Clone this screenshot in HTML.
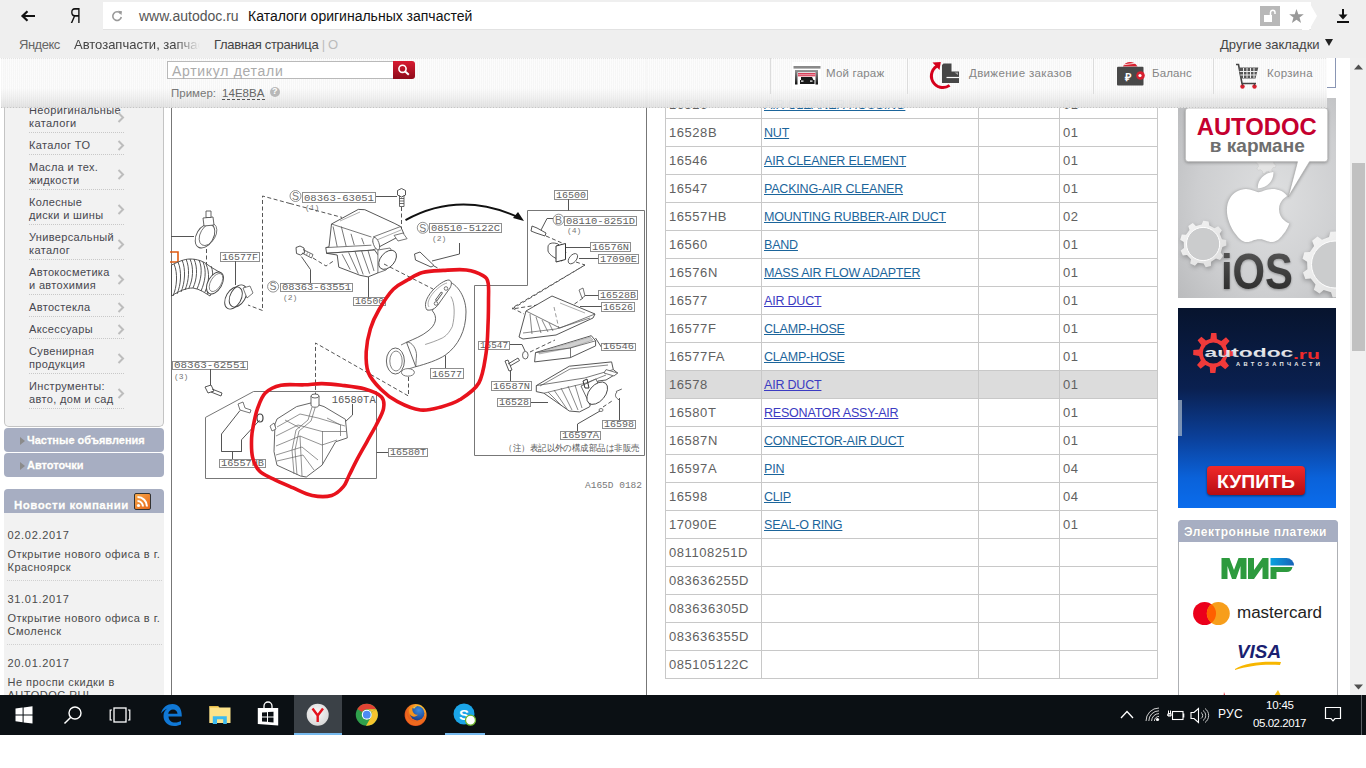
<!DOCTYPE html>
<html><head><meta charset="utf-8">
<style>
*{margin:0;padding:0;box-sizing:border-box}
html,body{width:1366px;height:768px;overflow:hidden;background:#fff;font-family:"Liberation Sans",sans-serif;position:relative}
.a{position:absolute;white-space:nowrap}
svg{position:absolute;overflow:visible}

</style></head><body>
<div class="a" style="left:0;top:0;width:1366px;height:58px;background:#efefef"></div>

<!-- back arrow -->
<svg style="left:20px;top:10px" width="16" height="12" viewBox="0 0 16 12"><path d="M15 6H3M7.5 1.2L2.5 6l5 4.8" fill="none" stroke="#111" stroke-width="2.2"/></svg>
<div class="a" style="left:70px;top:4px;font-size:22px;line-height:24px;color:#111;transform:scaleX(.68);transform-origin:0 0">Я</div>
<!-- url box -->
<div class="a" style="left:103px;top:2px;width:1208px;height:28px;background:#fff;border-bottom:1px solid #e2e2e2"></div>
<svg style="left:1302px;top:2px" width="16" height="28" viewBox="0 0 16 28"><path d="M0 0H7L15 14L7 28H0Z" fill="#fff"/></svg>
<svg style="left:111px;top:10px" width="12" height="12" viewBox="0 0 12 12"><path d="M9.5 3.5A4.3 4.3 0 1 0 10.3 7" fill="none" stroke="#999" stroke-width="1.6"/><path d="M7 0.8L11 1.2L10.4 5.2Z" fill="#999"/></svg>
<div class="a" style="left:139px;top:8px;font-size:14px;color:#555">www.autodoc.ru</div>
<div class="a" style="left:248px;top:8px;font-size:14px;color:#111">Каталоги оригинальных запчастей</div>
<div class="a" style="left:1260px;top:6px;width:20px;height:20px;background:#b8b8b8"></div>
<svg style="left:1263px;top:9px" width="14" height="14" viewBox="0 0 14 14"><rect x="1" y="6" width="8" height="7" fill="#fff"/><path d="M7.5 6V3.5A2.2 2.2 0 0 1 12 3.5V5" fill="none" stroke="#fff" stroke-width="1.5"/></svg>
<svg style="left:1289px;top:9px" width="15" height="14" viewBox="0 0 24 23"><path d="M12 0L15 8.5H24L17 14L19.5 23L12 17.5L4.5 23L7 14L0 8.5H9Z" fill="#999"/></svg>
<svg style="left:1336px;top:8px" width="14" height="16" viewBox="0 0 14 16"><path d="M7 1V10" stroke="#111" stroke-width="2"/><path d="M2.5 6.5L7 11.5L11.5 6.5Z" fill="#111"/><rect x="1" y="13" width="12" height="2" fill="#111"/></svg>
<!-- bookmarks -->
<div class="a" style="left:19px;top:37px;font-size:13px;letter-spacing:-.5px;color:#666">Яндекс</div>
<div class="a" style="left:74px;top:37px;font-size:13px;color:#444;width:126px;overflow:hidden;-webkit-mask-image:linear-gradient(90deg,#000 80%,transparent)">Автозапчасти, запчасти</div>
<div class="a" style="left:214px;top:37px;font-size:13px;letter-spacing:-.3px;color:#444">Главная страница <span style="color:#bbb">| О</span></div>
<div class="a" style="left:1220px;top:37px;font-size:13px;color:#444">Другие закладки</div>
<svg style="left:1325px;top:39px" width="8" height="7" viewBox="0 0 8 7"><path d="M0 0H8L4 7Z" fill="#222"/></svg>
<div class="a" style="left:4px;top:58px;width:160px;height:369px;background:#f2f2f2;border:1px solid #c4c4c4;border-top:none;border-radius:0 0 5px 5px"></div>
<div class="a" style="left:29px;top:104px;font-size:11px;line-height:13px;letter-spacing:.35px;color:#47474f">Неоригинальные<br>каталоги</div>
<div class="a" style="left:29px;top:132px;width:95px;height:1px;background-image:linear-gradient(90deg,#c8c8c8 50%,transparent 50%);background-size:2px 1px"></div>
<svg style="left:117px;top:111.5px" width="8" height="11" viewBox="0 0 8 11"><path d="M1.5 1L6 5.5L1.5 10" fill="none" stroke="#bdbdbd" stroke-width="2"/></svg>
<div class="a" style="left:29px;top:139px;font-size:11px;line-height:13px;letter-spacing:.35px;color:#47474f">Каталог ТО</div>
<div class="a" style="left:29px;top:154px;width:95px;height:1px;background-image:linear-gradient(90deg,#c8c8c8 50%,transparent 50%);background-size:2px 1px"></div>
<svg style="left:117px;top:140.0px" width="8" height="11" viewBox="0 0 8 11"><path d="M1.5 1L6 5.5L1.5 10" fill="none" stroke="#bdbdbd" stroke-width="2"/></svg>
<div class="a" style="left:29px;top:161px;font-size:11px;line-height:13px;letter-spacing:.35px;color:#47474f">Масла и тех.<br>жидкости</div>
<div class="a" style="left:29px;top:189px;width:95px;height:1px;background-image:linear-gradient(90deg,#c8c8c8 50%,transparent 50%);background-size:2px 1px"></div>
<svg style="left:117px;top:168.5px" width="8" height="11" viewBox="0 0 8 11"><path d="M1.5 1L6 5.5L1.5 10" fill="none" stroke="#bdbdbd" stroke-width="2"/></svg>
<div class="a" style="left:29px;top:196px;font-size:11px;line-height:13px;letter-spacing:.35px;color:#47474f">Колесные<br>диски и шины</div>
<div class="a" style="left:29px;top:224px;width:95px;height:1px;background-image:linear-gradient(90deg,#c8c8c8 50%,transparent 50%);background-size:2px 1px"></div>
<svg style="left:117px;top:203.5px" width="8" height="11" viewBox="0 0 8 11"><path d="M1.5 1L6 5.5L1.5 10" fill="none" stroke="#bdbdbd" stroke-width="2"/></svg>
<div class="a" style="left:29px;top:231px;font-size:11px;line-height:13px;letter-spacing:.35px;color:#47474f">Универсальный<br>каталог</div>
<div class="a" style="left:29px;top:259px;width:95px;height:1px;background-image:linear-gradient(90deg,#c8c8c8 50%,transparent 50%);background-size:2px 1px"></div>
<svg style="left:117px;top:238.5px" width="8" height="11" viewBox="0 0 8 11"><path d="M1.5 1L6 5.5L1.5 10" fill="none" stroke="#bdbdbd" stroke-width="2"/></svg>
<div class="a" style="left:29px;top:266px;font-size:11px;line-height:13px;letter-spacing:.35px;color:#47474f">Автокосметика<br>и автохимия</div>
<div class="a" style="left:29px;top:294px;width:95px;height:1px;background-image:linear-gradient(90deg,#c8c8c8 50%,transparent 50%);background-size:2px 1px"></div>
<svg style="left:117px;top:273.5px" width="8" height="11" viewBox="0 0 8 11"><path d="M1.5 1L6 5.5L1.5 10" fill="none" stroke="#bdbdbd" stroke-width="2"/></svg>
<div class="a" style="left:29px;top:301px;font-size:11px;line-height:13px;letter-spacing:.35px;color:#47474f">Автостекла</div>
<div class="a" style="left:29px;top:316px;width:95px;height:1px;background-image:linear-gradient(90deg,#c8c8c8 50%,transparent 50%);background-size:2px 1px"></div>
<svg style="left:117px;top:302.0px" width="8" height="11" viewBox="0 0 8 11"><path d="M1.5 1L6 5.5L1.5 10" fill="none" stroke="#bdbdbd" stroke-width="2"/></svg>
<div class="a" style="left:29px;top:323px;font-size:11px;line-height:13px;letter-spacing:.35px;color:#47474f">Аксессуары</div>
<div class="a" style="left:29px;top:338px;width:95px;height:1px;background-image:linear-gradient(90deg,#c8c8c8 50%,transparent 50%);background-size:2px 1px"></div>
<svg style="left:117px;top:324.0px" width="8" height="11" viewBox="0 0 8 11"><path d="M1.5 1L6 5.5L1.5 10" fill="none" stroke="#bdbdbd" stroke-width="2"/></svg>
<div class="a" style="left:29px;top:345px;font-size:11px;line-height:13px;letter-spacing:.35px;color:#47474f">Сувенирная<br>продукция</div>
<div class="a" style="left:29px;top:373px;width:95px;height:1px;background-image:linear-gradient(90deg,#c8c8c8 50%,transparent 50%);background-size:2px 1px"></div>
<svg style="left:117px;top:352.5px" width="8" height="11" viewBox="0 0 8 11"><path d="M1.5 1L6 5.5L1.5 10" fill="none" stroke="#bdbdbd" stroke-width="2"/></svg>
<div class="a" style="left:29px;top:380px;font-size:11px;line-height:13px;letter-spacing:.35px;color:#47474f">Инструменты:<br>авто, дом и сад</div>
<div class="a" style="left:29px;top:408px;width:95px;height:1px;background-image:linear-gradient(90deg,#c8c8c8 50%,transparent 50%);background-size:2px 1px"></div>
<svg style="left:117px;top:387.5px" width="8" height="11" viewBox="0 0 8 11"><path d="M1.5 1L6 5.5L1.5 10" fill="none" stroke="#bdbdbd" stroke-width="2"/></svg>
<div class="a" style="left:4px;top:428px;width:160px;height:24px;background:#a7aec2;border-radius:4px"></div>
<svg style="left:20px;top:437px" width="5" height="8" viewBox="0 0 5 8"><path d="M0 0L5 4L0 8Z" fill="#8b8b8b"/></svg>
<div class="a" style="left:27px;top:434px;font-size:11px;line-height:13px;font-weight:bold;color:#fff;-webkit-text-stroke:.35px #fff;text-shadow:0 0 1px #888">Частные объявления</div>
<div class="a" style="left:4px;top:453px;width:160px;height:24px;background:#a7aec2;border-radius:4px"></div>
<svg style="left:20px;top:462px" width="5" height="8" viewBox="0 0 5 8"><path d="M0 0L5 4L0 8Z" fill="#8b8b8b"/></svg>
<div class="a" style="left:27px;top:459px;font-size:11px;line-height:13px;font-weight:bold;color:#fff;-webkit-text-stroke:.35px #fff;text-shadow:0 0 1px #888">Автоточки</div>
<div class="a" style="left:4px;top:489px;width:160px;height:24px;background:#a7aec2;border-radius:4px 4px 0 0"></div>
<div class="a" style="left:14px;top:497.5px;font-size:11.5px;line-height:14px;letter-spacing:.5px;font-weight:bold;color:#fff;-webkit-text-stroke:.35px #fff;text-shadow:0 0 1px #888">Новости компании</div>
<div class="a" style="left:134px;top:493px;width:17px;height:17px;background:linear-gradient(135deg,#f9a94a,#e5661a);border:1px solid #333;border-radius:2px"></div>
<svg style="left:136px;top:495px" width="13" height="13" viewBox="0 0 13 13"><circle cx="2.5" cy="10.5" r="1.6" fill="#fff"/><path d="M1.5 6A5.5 5.5 0 0 1 7 11.5M1.5 2A9.5 9.5 0 0 1 11 11.5" fill="none" stroke="#fff" stroke-width="2"/></svg>
<div class="a" style="left:4px;top:513px;width:160px;height:190px;background:#f2f2f2"></div>
<div class="a" style="left:7.5px;top:529px;font-size:11px;line-height:13px;letter-spacing:.69px;color:#4a4a4a">02.02.2017</div>
<div class="a" style="left:7.5px;top:548px;font-size:11px;line-height:13px;letter-spacing:.48px;color:#4a4a4a">Открытие нового офиса в г.<br>Красноярск</div>
<div class="a" style="left:7.5px;top:593px;font-size:11px;line-height:13px;letter-spacing:.69px;color:#4a4a4a">31.01.2017</div>
<div class="a" style="left:7.5px;top:612px;font-size:11px;line-height:13px;letter-spacing:.48px;color:#4a4a4a">Открытие нового офиса в г.<br>Смоленск</div>
<div class="a" style="left:7.5px;top:657px;font-size:11px;line-height:13px;letter-spacing:.69px;color:#4a4a4a">20.01.2017</div>
<div class="a" style="left:7.5px;top:676px;font-size:11px;line-height:13px;letter-spacing:.48px;color:#4a4a4a">Не проспи скидки в<br>AUTODOC.RU!</div>
<div class="a" style="left:7px;top:580px;width:155px;height:1px;background-image:linear-gradient(90deg,#d0d0d0 50%,transparent 50%);background-size:2px 1px"></div>
<div class="a" style="left:7px;top:644px;width:155px;height:1px;background-image:linear-gradient(90deg,#d0d0d0 50%,transparent 50%);background-size:2px 1px"></div>
<svg style="left:171px;top:58px" width="476" height="637" viewBox="171 58 476 637">
<rect x="171" y="58" width="476" height="637" fill="#fff"/>
<path d="M171.5 58V695M646.5 58V695" stroke="#777" stroke-width="1"/>
<path d="M171.0 236.5 L194.0 236.5" fill="none" stroke="#555" stroke-width="1"/>
<ellipse cx="205" cy="236" rx="8.5" ry="13" transform="rotate(30 205 236)" fill="none" stroke="#555" stroke-width="0.9"/>
<ellipse cx="208" cy="234.5" rx="7.5" ry="12" transform="rotate(30 208 234.5)" fill="none" stroke="#666" stroke-width="0.8"/>
<path d="M203 218L213 217L214 225L204 226Z" fill="#fff" stroke="#555" stroke-width="0.9"/><path d="M206 211H211V217.5H206Z" fill="#fff" stroke="#555" stroke-width="0.9"/>
<path d="M206.5 249.0 L206.5 266.0" fill="none" stroke="#555" stroke-width="1" stroke-dasharray="4 2.5"/>
<path d="M170 252H178V262H170" fill="none" stroke="#e05a10" stroke-width="1.6"/>
<path d="M171.5 265C178 262 184 259 190 259C197 259 203 261 208 265C212 268 216 270 221 273L210 296C205 293 200 289 193 288C186 288 179 291 171.5 296Z" fill="#fff" stroke="#444" stroke-width="0.9"/>
<path d="M174 264C178 273 177 287 173 296" fill="none" stroke="#444" stroke-width="0.9"/>
<path d="M178 262C182 271 181 285 177 294" fill="none" stroke="#444" stroke-width="0.9"/>
<path d="M182 260C186 269 185 283 181 292" fill="none" stroke="#444" stroke-width="0.9"/>
<path d="M186 259C190 268 189 281 185 290" fill="none" stroke="#444" stroke-width="0.9"/>
<path d="M190 259C194 268 193 279 189 288" fill="none" stroke="#444" stroke-width="0.9"/>
<path d="M194 259C198 268 197 279 193 288" fill="none" stroke="#444" stroke-width="0.9"/>
<path d="M199 260C203 269 201 280 197 289" fill="none" stroke="#444" stroke-width="0.9"/>
<path d="M203 262C207 271 205 282 201 291" fill="none" stroke="#444" stroke-width="0.9"/>
<path d="M206 264C210 273 209 283 205 292" fill="none" stroke="#444" stroke-width="0.9"/>
<path d="M211 266C215 275 211 285 207 294" fill="none" stroke="#444" stroke-width="0.9"/>
<ellipse cx="215" cy="283" rx="7" ry="12" transform="rotate(30 215 283)" fill="#fff" stroke="#444" stroke-width="0.9"/>
<ellipse cx="216" cy="282.5" rx="5.3" ry="10" transform="rotate(30 216 282.5)" fill="none" stroke="#666" stroke-width="0.7"/>
<rect x="220.5" y="252.5" width="39.0" height="9.0" fill="none" stroke="#8f8f8f" stroke-width="1"/><text x="222.0" y="260.0" font-family="Liberation Mono" font-size="9.6" fill="#606060" textLength="36.0" lengthAdjust="spacingAndGlyphs">16577F</text>
<path d="M235.5 261.2 L235.5 285.0" fill="none" stroke="#555" stroke-width="1"/>
<ellipse cx="233.5" cy="298" rx="7.5" ry="12" transform="rotate(30 233.5 298)" fill="none" stroke="#444" stroke-width="0.9"/>
<ellipse cx="238" cy="296" rx="7.5" ry="12" transform="rotate(30 238 296)" fill="none" stroke="#444" stroke-width="0.9"/>
<path d="M243 288L250 286L253 293L247 298Z" fill="#fff" stroke="#555" stroke-width="0.8"/>
<path d="M290.0 203.5 L262.5 196.0 L262.5 310.5 L248.0 305.0" fill="none" stroke="#555" stroke-width="1" stroke-dasharray="4 2.5"/>
<circle cx="295.5" cy="196" r="5.5" fill="none" stroke="#777" stroke-width="0.8"/><text x="295.5" y="199.8" text-anchor="middle" font-family="Liberation Sans" font-size="10.5" fill="#777">S</text>
<rect x="302.5" y="192.5" width="73.0" height="10.0" fill="none" stroke="#8f8f8f" stroke-width="1"/><text x="304.0" y="201.0" font-family="Liberation Mono" font-size="9.6" fill="#606060" textLength="70.0" lengthAdjust="spacingAndGlyphs">08363-63051</text>
<text x="305" y="210" font-family="Liberation Mono" font-size="8" fill="#777">(1)</text>
<path d="M376.0 196.5 L397.0 196.5" fill="none" stroke="#555" stroke-width="1"/>
<path d="M397.5 190.5L401.5 188.5L405.5 190.5L405.5 195L401.5 197L397.5 195Z" fill="#fff" stroke="#444" stroke-width="0.9"/>
<path d="M399.5 195.5V206.5H404V195.5M399.5 198.5H404M399.5 201H404M399.5 203.5H404" fill="none" stroke="#444" stroke-width="0.8"/>
<path d="M401.5 207.0 L401.5 229.0" fill="none" stroke="#555" stroke-width="1" stroke-dasharray="4 2.5"/>
<path d="M290.0 203.5 L342.0 217.4" fill="none" stroke="#555" stroke-width="1" stroke-dasharray="4 2.5"/>
<path d="M331.5 224L358.3 209.4L364.8 209.7L394.1 223.2L400.6 226.5L403.9 233.8L374.6 249.3L372.2 250.1L326.6 253.3L325.8 247.6L329 246.8Z" fill="#fff" stroke="#444" stroke-width="0.9"/>
<path d="M331.5 224.0 L371.4 237.0" fill="none" stroke="#555" stroke-width="0.8"/>
<path d="M325.8 247.6 L371.4 245.2" fill="none" stroke="#555" stroke-width="0.8"/>
<path d="M373.0 237.0 L400.6 226.5" fill="none" stroke="#555" stroke-width="0.8"/>
<path d="M372.0 242.0 L401.0 230.0" fill="none" stroke="#777" stroke-width="0.6"/>
<path d="M340.0 221.0 L360.0 212.0" fill="none" stroke="#777" stroke-width="0.6"/>
<ellipse cx="376.2" cy="243.6" rx="2.8" ry="6.5" transform="rotate(-20 376.2 243.6)" fill="#fff" stroke="#555" stroke-width="0.8"/>
<path d="M394.1 235.4L403 233L407.1 238.7L398 241Z" fill="#fff" stroke="#555" stroke-width="0.8"/>
<path d="M333.1 226.5 L337.2 246.8" fill="none" stroke="#555" stroke-width="0.8"/>
<path d="M341.3 226.5 L346.1 246.0" fill="none" stroke="#555" stroke-width="0.8"/>
<path d="M351.0 233.8 L354.3 245.2" fill="none" stroke="#555" stroke-width="0.8"/>
<path d="M361.6 237.9 L364.0 244.4" fill="none" stroke="#555" stroke-width="0.8"/>
<path d="M337.2 255L338.8 267.2L360 275.3L368.1 276.9L377.9 272.9L383 262L374.6 250L326.6 253.3Z" fill="#fff" stroke="#444" stroke-width="0.9"/>
<path d="M342.1 254.2 L350.2 269.6" fill="none" stroke="#555" stroke-width="0.8"/>
<path d="M348.6 252.5 L358.3 273.7" fill="none" stroke="#555" stroke-width="0.8"/>
<path d="M355.1 251.7 L363.2 274.5" fill="none" stroke="#555" stroke-width="0.8"/>
<path d="M361.6 250.9 L369.7 273.7" fill="none" stroke="#555" stroke-width="0.8"/>
<path d="M368.0 250.5 L374.0 271.0" fill="none" stroke="#555" stroke-width="0.8"/>
<path d="M377.9 250L390 248L395 256L386 270L377.9 272.9Z" fill="#fff" stroke="#555" stroke-width="0.8"/>
<ellipse cx="387.6" cy="259.8" rx="7" ry="11" transform="rotate(40 387.6 259.8)" fill="#fff" stroke="#444" stroke-width="0.9"/>
<path d="M296 247.5L300 246L304 248L304.5 252.5L300.5 255L296.5 253.5Z" fill="#fff" stroke="#444" stroke-width="0.9"/>
<path d="M303 249.5L313 254.5L311.5 258L302 253" fill="none" stroke="#444" stroke-width="0.8"/><path d="M305 251L304 254M307.5 252.3L306.5 255.3M310 253.5L309 256.5" stroke="#555" stroke-width="0.6"/>
<path d="M313.0 258.0 L326.0 266.0 L335.0 260.0" fill="none" stroke="#555" stroke-width="1" stroke-dasharray="4 2.5"/>
<path d="M301.4 256.6 L310.5 269.6 L310.5 283.0" fill="none" stroke="#555" stroke-width="1"/>
<circle cx="273.1" cy="286.6" r="5.5" fill="none" stroke="#777" stroke-width="0.8"/><text x="273.1" y="290.40000000000003" text-anchor="middle" font-family="Liberation Sans" font-size="10.5" fill="#777">S</text>
<rect x="280.5" y="283.5" width="72.0" height="8.0" fill="none" stroke="#8f8f8f" stroke-width="1"/><text x="282.0" y="290.0" font-family="Liberation Mono" font-size="9.6" fill="#606060" textLength="69.0" lengthAdjust="spacingAndGlyphs">08363-63551</text>
<text x="283" y="300" font-family="Liberation Mono" font-size="8" fill="#777">(2)</text>
<rect x="353.5" y="297.5" width="32.0" height="8.0" fill="none" stroke="#8f8f8f" stroke-width="1"/><text x="355.0" y="304.0" font-family="Liberation Mono" font-size="9.6" fill="#606060" textLength="29.0" lengthAdjust="spacingAndGlyphs">16500</text>
<path d="M368.5 297.5 L368.5 277.0" fill="none" stroke="#555" stroke-width="1"/>
<path d="M384.0 264.0 L433.0 289.0" fill="none" stroke="#555" stroke-width="1" stroke-dasharray="4 2.5"/>
<path d="M405.5 220.1Q460 190 520 218" fill="none" stroke="#111" stroke-width="2"/>
<path d="M524 221L513 218L518 212Z" fill="#111"/>
<circle cx="422.8" cy="227.8" r="5.5" fill="none" stroke="#777" stroke-width="0.8"/><text x="422.8" y="231.60000000000002" text-anchor="middle" font-family="Liberation Sans" font-size="10.5" fill="#777">S</text>
<rect x="429.5" y="223.5" width="72.0" height="9.0" fill="none" stroke="#8f8f8f" stroke-width="1"/><text x="431.0" y="231.0" font-family="Liberation Mono" font-size="9.6" fill="#606060" textLength="69.0" lengthAdjust="spacingAndGlyphs">08510-5122C</text>
<text x="432" y="241" font-family="Liberation Mono" font-size="8" fill="#777">(2)</text>
<path d="M459.5 243.0 L459.5 254.0 L432.0 261.0" fill="none" stroke="#555" stroke-width="1"/>
<path d="M414.5 254L420 252L434 265.5L431 267L415.5 260Z" fill="#fff" stroke="#444" stroke-width="0.9"/>
<path d="M434.0 266.0 L445.0 272.0" fill="none" stroke="#555" stroke-width="1" stroke-dasharray="4 2.5"/>
<path d="M527.5 210.5 L644.5 210.5 L644.5 455.5 L474.5 455.5 L474.5 285.5 L527.5 285.5Z" fill="none" stroke="#777" stroke-width="1"/>
<rect x="554.5" y="190.5" width="33.0" height="9.0" fill="none" stroke="#8f8f8f" stroke-width="1"/><text x="556.0" y="198.0" font-family="Liberation Mono" font-size="9.6" fill="#606060" textLength="30.0" lengthAdjust="spacingAndGlyphs">16500</text>
<path d="M568.5 199.1 L568.5 210.5" fill="none" stroke="#555" stroke-width="1"/>
<circle cx="558.6" cy="219.7" r="5.5" fill="none" stroke="#777" stroke-width="0.8"/><text x="558.6" y="223.5" text-anchor="middle" font-family="Liberation Sans" font-size="10.5" fill="#777">B</text>
<rect x="564.5" y="216.5" width="72.0" height="9.0" fill="none" stroke="#8f8f8f" stroke-width="1"/><text x="566.0" y="224.0" font-family="Liberation Mono" font-size="9.6" fill="#606060" textLength="69.0" lengthAdjust="spacingAndGlyphs">08110-8251D</text>
<text x="567" y="233" font-family="Liberation Mono" font-size="8" fill="#777">(4)</text>
<path d="M553.0 218.5 L547.0 218.5 L540.0 232.0" fill="none" stroke="#555" stroke-width="1"/>
<path d="M532 226L537 228L546 233L545 236L536 233L531 231Z" fill="#fff" stroke="#444" stroke-width="0.9"/>
<path d="M546.0 236.0 L562.0 243.0" fill="none" stroke="#555" stroke-width="1" stroke-dasharray="4 2.5"/>
<path d="M548 247C548 243 553 242 558 244L566 252L562 261C556 259 549 255 548 251Z" fill="#fff" stroke="#444" stroke-width="0.9"/>
<path d="M556 246L565.5 243.5V259.5L556 262Z" fill="#fff" stroke="#333" stroke-width="1"/>
<path d="M566.0 247.5 L590.2 247.5" fill="none" stroke="#555" stroke-width="1"/>
<rect x="590.5" y="242.5" width="40.0" height="9.0" fill="none" stroke="#8f8f8f" stroke-width="1"/><text x="592.0" y="250.0" font-family="Liberation Mono" font-size="9.6" fill="#606060" textLength="37.0" lengthAdjust="spacingAndGlyphs">16576N</text>
<ellipse cx="572.9" cy="258.7" rx="3.5" ry="6" transform="rotate(40 572.9 258.7)" fill="none" stroke="#555" stroke-width="0.9"/>
<path d="M579.0 258.5 L598.4 258.5" fill="none" stroke="#555" stroke-width="1"/>
<rect x="598.5" y="254.5" width="40.0" height="9.0" fill="none" stroke="#8f8f8f" stroke-width="1"/><text x="600.0" y="262.0" font-family="Liberation Mono" font-size="9.6" fill="#606060" textLength="37.0" lengthAdjust="spacingAndGlyphs">17090E</text>
<path d="M576.0 262.0 L585.0 265.0 L512.0 309.0 L544.0 304.0" fill="none" stroke="#555" stroke-width="1" stroke-dasharray="4 2.5"/>
<rect x="598.5" y="290.5" width="39.0" height="9.0" fill="none" stroke="#8f8f8f" stroke-width="1"/><text x="600.0" y="298.0" font-family="Liberation Mono" font-size="9.6" fill="#606060" textLength="36.0" lengthAdjust="spacingAndGlyphs">16528B</text>
<path d="M579 290L583 288L585 296L582 298Z" fill="#fff" stroke="#555" stroke-width="0.8"/>
<path d="M585.0 295.5 L598.4 295.5" fill="none" stroke="#555" stroke-width="1"/>
<path d="M583.0 298.0 L566.0 310.0" fill="none" stroke="#555" stroke-width="1" stroke-dasharray="4 2.5"/>
<rect x="601.5" y="302.5" width="33.0" height="9.0" fill="none" stroke="#8f8f8f" stroke-width="1"/><text x="603.0" y="310.0" font-family="Liberation Mono" font-size="9.6" fill="#606060" textLength="30.0" lengthAdjust="spacingAndGlyphs">16526</text>
<path d="M580.0 306.5 L601.5 306.5" fill="none" stroke="#555" stroke-width="1"/>
<path d="M585.0 265.0 L512.0 308.0 L524.0 314.0" fill="none" stroke="#555" stroke-width="1" stroke-dasharray="4 2.5"/>
<path d="M526 311L552 296L595 314L593 318L556 335L523 339L519 337Z" fill="#fff" stroke="#444" stroke-width="0.9"/>
<path d="M526.0 311.0 L560.0 328.0 L595.0 314.0" fill="none" stroke="#555" stroke-width="0.8"/>
<path d="M523.0 333.0 L556.0 329.0 L590.0 318.0" fill="none" stroke="#555" stroke-width="0.7"/>
<path d="M530.0 314.0 L532.0 334.0" fill="none" stroke="#555" stroke-width="0.7"/>
<path d="M536.0 317.0 L541.0 333.0" fill="none" stroke="#555" stroke-width="0.7"/>
<path d="M542.0 320.0 L548.0 332.0" fill="none" stroke="#555" stroke-width="0.7"/>
<path d="M549.0 323.0 L553.0 331.0" fill="none" stroke="#555" stroke-width="0.7"/>
<path d="M554.0 307.0 L559.0 329.0" fill="none" stroke="#555" stroke-width="0.6" stroke-dasharray="4 2.5"/>
<path d="M560.0 303.0 L585.0 313.0" fill="none" stroke="#777" stroke-width="0.6"/>
<path d="M535.5 352.6L591.3 335.7L595.6 340.8V345.9L570.2 357.7L534.6 361.9Z" fill="#fff" stroke="#444" stroke-width="0.9"/>
<path d="M539 352L590 337L593 340L570 348L539 354Z" fill="#d0d0d0" stroke="#888" stroke-width="0.5"/>
<path d="M535.5 352.6 L570.2 348.0 L595.6 340.8" fill="none" stroke="#555" stroke-width="0.8"/>
<path d="M570.5 348.0 L570.5 357.7" fill="none" stroke="#555" stroke-width="0.8"/>
<path d="M595.5 338.0 L601.3 347.0" fill="none" stroke="#555" stroke-width="1"/>
<rect x="601.5" y="343.5" width="34.0" height="7.0" fill="none" stroke="#8f8f8f" stroke-width="1"/><text x="603.0" y="349.0" font-family="Liberation Mono" font-size="9.6" fill="#606060" textLength="31.0" lengthAdjust="spacingAndGlyphs">16546</text>
<rect x="478.5" y="341.5" width="31.0" height="8.0" fill="none" stroke="#8f8f8f" stroke-width="1"/><text x="480.0" y="348.0" font-family="Liberation Mono" font-size="9.6" fill="#606060" textLength="28.0" lengthAdjust="spacingAndGlyphs">16547</text>
<path d="M510.0 344.5 L522.0 344.5 L525.0 351.0" fill="none" stroke="#555" stroke-width="1"/>
<ellipse cx="525.3" cy="355.2" rx="2.8" ry="3.8" fill="none" stroke="#555" stroke-width="0.9"/>
<path d="M530.0 352.0 L555.0 340.0" fill="none" stroke="#555" stroke-width="1" stroke-dasharray="4 2.5"/>
<path d="M505 361L508 360L512 370L509 371Z" fill="#fff" stroke="#444" stroke-width="0.9"/><path d="M508 364L518 358L519.5 360.5L510 366" fill="none" stroke="#444" stroke-width="0.9"/>
<path d="M510.5 371.0 L510.5 382.0" fill="none" stroke="#555" stroke-width="1"/>
<rect x="491.5" y="381.5" width="40.0" height="9.0" fill="none" stroke="#8f8f8f" stroke-width="1"/><text x="493.0" y="389.0" font-family="Liberation Mono" font-size="9.6" fill="#606060" textLength="37.0" lengthAdjust="spacingAndGlyphs">16587N</text>
<path d="M536.3 385.6L569.3 366.2L611.6 361.9L613.3 369.6L617.6 373L606 380L598 381L589.6 406.8L579.5 411.9L569.3 411L543.9 393.2L536.3 391.6Z" fill="#fff" stroke="#444" stroke-width="0.9"/>
<path d="M536.3 385.6 L584.6 378.0 L613.3 369.6" fill="none" stroke="#555" stroke-width="0.8"/>
<path d="M540.0 386.0 L570.0 369.0 L608.0 365.0" fill="none" stroke="#555" stroke-width="0.7"/>
<path d="M543.9 393.2 L586.0 383.0 L606.0 375.0" fill="none" stroke="#555" stroke-width="0.7"/>
<path d="M548.0 392.0 L562.0 406.0" fill="none" stroke="#555" stroke-width="0.7"/>
<path d="M554.0 390.0 L567.0 409.0" fill="none" stroke="#555" stroke-width="0.7"/>
<path d="M561.0 388.0 L572.0 410.0" fill="none" stroke="#555" stroke-width="0.7"/>
<path d="M568.0 386.0 L578.0 410.0" fill="none" stroke="#555" stroke-width="0.7"/>
<path d="M575.0 385.0 L582.0 408.0" fill="none" stroke="#555" stroke-width="0.7"/>
<path d="M581 386L596 379L604 396L590 405Z" fill="#fff" stroke="#444" stroke-width="0.8"/>
<ellipse cx="597.2" cy="393.2" rx="8" ry="13" transform="rotate(40 597.2 393.2)" fill="#fff" stroke="#444" stroke-width="0.9"/>
<path d="M583 381L587 379L589 388L585 388Z" fill="none" stroke="#333" stroke-width="1"/>
<path d="M606 369.6L617.6 373L614 376L604 373Z" fill="#fff" stroke="#555" stroke-width="0.8"/>
<path d="M530.5 402.5 L548.0 402.5" fill="none" stroke="#555" stroke-width="1"/>
<rect x="497.5" y="398.5" width="33.0" height="8.0" fill="none" stroke="#8f8f8f" stroke-width="1"/><text x="499.0" y="405.0" font-family="Liberation Mono" font-size="9.6" fill="#606060" textLength="30.0" lengthAdjust="spacingAndGlyphs">16528</text>
<path d="M615.9 391.6L621.8 389M617 392C614 395 616 398 618 399L619 400" fill="none" stroke="#555" stroke-width="0.9"/>
<path d="M619.5 398.0 L619.5 420.7" fill="none" stroke="#555" stroke-width="1"/>
<rect x="602.5" y="420.5" width="33.0" height="8.0" fill="none" stroke="#8f8f8f" stroke-width="1"/><text x="604.0" y="427.0" font-family="Liberation Mono" font-size="9.6" fill="#606060" textLength="30.0" lengthAdjust="spacingAndGlyphs">16598</text>
<path d="M577.5 431.7 L577.5 424.0 L600.0 411.0" fill="none" stroke="#555" stroke-width="1"/>
<ellipse cx="601" cy="410" rx="2" ry="1.5" fill="none" stroke="#555" stroke-width="0.8"/>
<path d="M603.0 407.0 L612.0 401.0" fill="none" stroke="#555" stroke-width="1" stroke-dasharray="4 2.5"/>
<rect x="560.5" y="431.5" width="40.0" height="8.0" fill="none" stroke="#8f8f8f" stroke-width="1"/><text x="562.0" y="438.0" font-family="Liberation Mono" font-size="9.6" fill="#606060" textLength="37.0" lengthAdjust="spacingAndGlyphs">16597A</text>
<text x="504.4" y="450.5" font-family="Liberation Sans" font-size="8.6" fill="#555" textLength="135" lengthAdjust="spacingAndGlyphs">（注）表記以外の構成部品は非販売</text>
<path d="M445 281C455 281 466 295 466 312C466 331 458 346 445.2 355.2C438 360 426 364 415.8 366.7L406.5 342.3C414 339 422 336 428 331C436 325 438 317 432.3 310.8Z" fill="#fff" stroke="#555" stroke-width="0.9"/>
<path d="M427 310C424 306 425 299 433 290C439 284 445 280 449 280C452 281 452 284 450 288L440 302C437 307 433 311 427 310Z" fill="#fff" stroke="#555" stroke-width="0.9"/>
<path d="M429 307C427 304 428 299 434 292C439 287 443 284 447 283" fill="none" stroke="#777" stroke-width="0.6"/>
<circle cx="446" cy="288.5" r="1.8" fill="none" stroke="#555" stroke-width="0.8"/><path d="M441.5 293L436.5 300" stroke="#555" stroke-width="2.4" stroke-linecap="round" fill="none"/><path d="M441.5 293L436.5 300" stroke="#fff" stroke-width="1" stroke-linecap="round" fill="none"/><circle cx="436" cy="303.5" r="1.8" fill="none" stroke="#555" stroke-width="0.8"/>
<path d="M450.9 296.5C455 303 455 316 452.3 326.6C449 333 446 336 442.3 338C436 341 430 343 425.1 344.5" fill="none" stroke="#777" stroke-width="0.7"/>
<path d="M406.5 342.3C412 341 417 350 416.5 356C416 362 415.8 366.7 415.8 366.7" fill="none" stroke="#555" stroke-width="0.8"/>
<path d="M401 345L406.5 342.3M405 370L415.8 366.7" fill="none" stroke="#555" stroke-width="0.8"/>
<ellipse cx="395.4" cy="361" rx="9" ry="13" fill="#fff" stroke="#555" stroke-width="0.9"/>
<ellipse cx="396" cy="361" rx="6.2" ry="10" fill="none" stroke="#666" stroke-width="0.8"/>
<ellipse cx="407.9" cy="372.4" rx="6.5" ry="3.8" fill="#fff" stroke="#555" stroke-width="0.8"/>
<path d="M445.5 355.5 L445.5 368.8" fill="none" stroke="#555" stroke-width="1"/>
<rect x="430.5" y="368.5" width="33.0" height="10.0" fill="none" stroke="#8f8f8f" stroke-width="1"/><text x="432.0" y="377.0" font-family="Liberation Mono" font-size="9.6" fill="#606060" textLength="30.0" lengthAdjust="spacingAndGlyphs">16577</text>
<path d="M408.5 377.0 L408.5 396.0 L315.5 343.0 L315.5 396.0" fill="none" stroke="#555" stroke-width="1" stroke-dasharray="4 2.5"/>
<rect x="172.5" y="361.5" width="75.0" height="8.0" fill="none" stroke="#8f8f8f" stroke-width="1"/><text x="174.0" y="368.0" font-family="Liberation Mono" font-size="9.6" fill="#606060" textLength="72.0" lengthAdjust="spacingAndGlyphs">08363-62551</text>
<text x="174" y="379" font-family="Liberation Mono" font-size="8" fill="#777">(3)</text>
<path d="M210.5 369.0 L210.5 386.0" fill="none" stroke="#555" stroke-width="1"/>
<path d="M205 387L211 385L214 391L208 393Z" fill="#fff" stroke="#444" stroke-width="0.9"/><path d="M212 389L222 393L221 396L211 392" fill="none" stroke="#444" stroke-width="0.9"/>
<path d="M205.5 417.4 L253.6 391.5 L376.5 391.5 L376.5 478.5 L205.5 478.5Z" fill="none" stroke="#777" stroke-width="1"/>
<path d="M376.6 452.5 L388.4 452.5" fill="none" stroke="#555" stroke-width="1"/>
<rect x="388.5" y="448.5" width="39.0" height="8.0" fill="none" stroke="#8f8f8f" stroke-width="1"/><text x="390.0" y="455.0" font-family="Liberation Mono" font-size="9.6" fill="#606060" textLength="36.0" lengthAdjust="spacingAndGlyphs">16580T</text>
<text x="331.7" y="403.1" font-family="Liberation Mono" font-size="10" fill="#555" textLength="44" lengthAdjust="spacingAndGlyphs">16580TA</text>
<path d="M352.5 404.0 L352.5 415.0 L345.0 422.0" fill="none" stroke="#555" stroke-width="1"/>
<path d="M221.5 451.6 L221.5 434.0 L240.0 410.5" fill="none" stroke="#555" stroke-width="1"/>
<path d="M241.5 451.6 L241.5 439.8 L259.5 420.3" fill="none" stroke="#555" stroke-width="1"/>
<path d="M221.4 451.5 L241.9 451.5" fill="none" stroke="#555" stroke-width="1"/>
<path d="M232.5 451.6 L232.5 459.4" fill="none" stroke="#555" stroke-width="1"/>
<rect x="219.5" y="459.5" width="46.0" height="8.0" fill="none" stroke="#8f8f8f" stroke-width="1"/><text x="221.0" y="466.0" font-family="Liberation Mono" font-size="9.6" fill="#606060" textLength="43.0" lengthAdjust="spacingAndGlyphs">16557HB</text>
<path d="M238 404L243 402L245 408L251 410L250 413L240 410Z" fill="#fff" stroke="#555" stroke-width="0.8"/>
<ellipse cx="260" cy="418" rx="3" ry="4" fill="none" stroke="#444" stroke-width="1.2"/>
<path d="M275 424L277 419L296.6 406.6L312 402.7L324 406.6L345.4 419.3L347.3 437.9L335.6 441.8L322 465.2L306.3 477L300.5 476L277 465.2L274 451.6Z" fill="#fff" stroke="#555" stroke-width="0.9"/>
<path d="M277.0 427.0 L300.0 414.0 L318.0 418.0 L345.0 426.0" fill="none" stroke="#666" stroke-width="0.7"/>
<path d="M276.0 436.0 L298.0 425.0 L322.0 431.5 L346.0 431.5" fill="none" stroke="#666" stroke-width="0.7"/>
<path d="M276.0 446.0 L300.0 436.0 L322.0 445.0 L337.0 440.0" fill="none" stroke="#666" stroke-width="0.7"/>
<path d="M276.0 455.0 L302.0 447.0 L318.0 460.0" fill="none" stroke="#666" stroke-width="0.7"/>
<path d="M277.0 461.0 L303.0 455.0 L314.0 470.0" fill="none" stroke="#666" stroke-width="0.7"/>
<path d="M300.0 436.0 L302.0 476.0" fill="none" stroke="#666" stroke-width="0.7"/>
<path d="M322.5 431.0 L322.5 465.0" fill="none" stroke="#666" stroke-width="0.7"/>
<path d="M312.0 407.0 L308.0 420.0 L296.0 430.0 L292.0 450.0 L294.0 474.0" fill="none" stroke="#666" stroke-width="0.7"/>
<path d="M315.0 408.0 L311.0 421.0 L299.0 431.0 L295.0 450.0 L297.0 475.0" fill="none" stroke="#666" stroke-width="0.7"/>
<path d="M327.0 418.0 L340.5 425.0 L340.5 436.0" fill="none" stroke="#666" stroke-width="0.7"/>
<path d="M285.0 420.0 L300.0 428.0" fill="none" stroke="#666" stroke-width="0.7"/>
<path d="M311 396V405C311 408 319 408 319 405V396Z" fill="#fff" stroke="#555" stroke-width="0.9"/><ellipse cx="315" cy="396" rx="4" ry="2" fill="#fff" stroke="#555" stroke-width="0.9"/>
<path d="M270 426L274 423L276 429L272 431Z" fill="#fff" stroke="#555" stroke-width="0.8"/>
<text x="585" y="487.5" font-family="Liberation Mono" font-size="9" fill="#777" textLength="57" lengthAdjust="spacingAndGlyphs">A165D 0182</text>
<path d="M422.5 272.5 C428.4 270.9 436.0 270.8 443.3 270.4 C450.6 270.0 459.7 269.1 466.3 270.0 C472.9 270.9 479.4 273.5 483.0 275.6 C486.6 277.8 487.2 278.8 488.1 282.9 C489.0 287.0 488.5 293.4 488.5 300.0 C488.5 306.6 488.5 313.5 488.1 322.5 C487.7 331.5 487.6 343.7 486.0 353.8 C484.4 363.9 483.1 375.4 478.8 383.0 C474.4 390.6 466.2 395.6 460.0 399.6 C453.8 403.6 447.9 405.2 441.2 406.9 C434.6 408.6 427.7 410.9 420.4 410.0 C413.1 409.1 404.1 405.2 397.5 401.7 C390.9 398.2 385.7 394.1 380.8 389.2 C375.9 384.3 370.7 378.8 368.3 372.5 C365.9 366.2 365.9 359.0 366.2 351.7 C366.6 344.4 368.3 335.7 370.4 328.8 C372.5 321.8 374.9 316.6 378.8 310.0 C382.6 303.4 388.4 294.2 393.3 289.2 C398.2 284.2 403.0 282.6 407.9 279.8 C412.8 277.0 416.6 274.1 422.5 272.5Z" fill="none" stroke="#e8121c" stroke-width="3.6" stroke-linejoin="round"/>
<path d="M280.9 385.2 C287.4 383.8 297.5 385.1 304.4 384.8 C311.2 384.5 315.8 383.5 322.0 383.6 C328.2 383.7 334.4 384.3 341.5 385.2 C348.6 386.1 358.2 387.1 364.9 389.0 C371.6 390.9 378.4 393.6 381.5 396.9 C384.6 400.2 384.3 404.1 383.5 408.6 C382.7 413.2 379.4 418.7 376.6 424.2 C373.8 429.7 370.1 435.9 366.9 441.8 C363.6 447.7 360.0 453.9 357.1 459.4 C354.2 464.9 351.6 470.4 349.3 475.0 C347.0 479.6 346.3 483.3 343.4 486.7 C340.5 490.1 336.9 494.0 331.7 495.5 C326.5 497.0 318.7 496.8 312.2 495.5 C305.7 494.2 299.2 490.5 292.7 487.7 C286.2 484.9 278.6 481.7 273.1 478.9 C267.6 476.1 262.9 474.7 259.5 471.1 C256.1 467.5 253.9 462.9 252.6 457.4 C251.3 451.9 251.4 443.4 251.6 437.9 C251.8 432.4 252.6 429.1 253.6 424.2 C254.6 419.3 255.6 413.8 257.5 408.6 C259.4 403.4 261.4 396.9 265.3 393.0 C269.2 389.1 274.4 386.6 280.9 385.2Z" fill="none" stroke="#e8121c" stroke-width="3.6" stroke-linejoin="round"/>
</svg>
<div class="a" style="left:665px;top:60px;width:493px;height:619px;border:1px solid #c8c8c8;border-top:none"></div>
<div class="a" style="left:665px;top:118px;width:493px;height:1px;background:#c8c8c8"></div>
<div class="a" style="left:669px;top:98px;font-size:13px;line-height:14px;letter-spacing:.55px;color:#616161">16526</div>
<div class="a" style="left:764px;top:98px;font-size:12.5px;line-height:14px;letter-spacing:-.2px;color:#1b659b;text-decoration:underline">AIR CLEANER HOUSING</div>
<div class="a" style="left:1063px;top:98px;font-size:13px;line-height:14px;letter-spacing:.55px;color:#616161">01</div>
<div class="a" style="left:665px;top:146px;width:493px;height:1px;background:#c8c8c8"></div>
<div class="a" style="left:669px;top:126px;font-size:13px;line-height:14px;letter-spacing:.55px;color:#616161">16528B</div>
<div class="a" style="left:764px;top:126px;font-size:12.5px;line-height:14px;letter-spacing:-.2px;color:#1b659b;text-decoration:underline">NUT</div>
<div class="a" style="left:1063px;top:126px;font-size:13px;line-height:14px;letter-spacing:.55px;color:#616161">01</div>
<div class="a" style="left:665px;top:174px;width:493px;height:1px;background:#c8c8c8"></div>
<div class="a" style="left:669px;top:154px;font-size:13px;line-height:14px;letter-spacing:.55px;color:#616161">16546</div>
<div class="a" style="left:764px;top:154px;font-size:12.5px;line-height:14px;letter-spacing:-.2px;color:#1b659b;text-decoration:underline">AIR CLEANER ELEMENT</div>
<div class="a" style="left:1063px;top:154px;font-size:13px;line-height:14px;letter-spacing:.55px;color:#616161">01</div>
<div class="a" style="left:665px;top:202px;width:493px;height:1px;background:#c8c8c8"></div>
<div class="a" style="left:669px;top:182px;font-size:13px;line-height:14px;letter-spacing:.55px;color:#616161">16547</div>
<div class="a" style="left:764px;top:182px;font-size:12.5px;line-height:14px;letter-spacing:-.2px;color:#1b659b;text-decoration:underline">PACKING-AIR CLEANER</div>
<div class="a" style="left:1063px;top:182px;font-size:13px;line-height:14px;letter-spacing:.55px;color:#616161">01</div>
<div class="a" style="left:665px;top:230px;width:493px;height:1px;background:#c8c8c8"></div>
<div class="a" style="left:669px;top:210px;font-size:13px;line-height:14px;letter-spacing:.55px;color:#616161">16557HB</div>
<div class="a" style="left:764px;top:210px;font-size:12.5px;line-height:14px;letter-spacing:-.2px;color:#1b659b;text-decoration:underline">MOUNTING RUBBER-AIR DUCT</div>
<div class="a" style="left:1063px;top:210px;font-size:13px;line-height:14px;letter-spacing:.55px;color:#616161">02</div>
<div class="a" style="left:665px;top:258px;width:493px;height:1px;background:#c8c8c8"></div>
<div class="a" style="left:669px;top:238px;font-size:13px;line-height:14px;letter-spacing:.55px;color:#616161">16560</div>
<div class="a" style="left:764px;top:238px;font-size:12.5px;line-height:14px;letter-spacing:-.2px;color:#1b659b;text-decoration:underline">BAND</div>
<div class="a" style="left:1063px;top:238px;font-size:13px;line-height:14px;letter-spacing:.55px;color:#616161">01</div>
<div class="a" style="left:665px;top:286px;width:493px;height:1px;background:#c8c8c8"></div>
<div class="a" style="left:669px;top:266px;font-size:13px;line-height:14px;letter-spacing:.55px;color:#616161">16576N</div>
<div class="a" style="left:764px;top:266px;font-size:12.5px;line-height:14px;letter-spacing:-.2px;color:#1b659b;text-decoration:underline">MASS AIR FLOW ADAPTER</div>
<div class="a" style="left:1063px;top:266px;font-size:13px;line-height:14px;letter-spacing:.55px;color:#616161">01</div>
<div class="a" style="left:665px;top:314px;width:493px;height:1px;background:#c8c8c8"></div>
<div class="a" style="left:669px;top:294px;font-size:13px;line-height:14px;letter-spacing:.55px;color:#616161">16577</div>
<div class="a" style="left:764px;top:294px;font-size:12.5px;line-height:14px;letter-spacing:-.2px;color:#3b3bc2;text-decoration:underline">AIR DUCT</div>
<div class="a" style="left:1063px;top:294px;font-size:13px;line-height:14px;letter-spacing:.55px;color:#616161">01</div>
<div class="a" style="left:665px;top:342px;width:493px;height:1px;background:#c8c8c8"></div>
<div class="a" style="left:669px;top:322px;font-size:13px;line-height:14px;letter-spacing:.55px;color:#616161">16577F</div>
<div class="a" style="left:764px;top:322px;font-size:12.5px;line-height:14px;letter-spacing:-.2px;color:#1b659b;text-decoration:underline">CLAMP-HOSE</div>
<div class="a" style="left:1063px;top:322px;font-size:13px;line-height:14px;letter-spacing:.55px;color:#616161">01</div>
<div class="a" style="left:665px;top:370px;width:493px;height:1px;background:#c8c8c8"></div>
<div class="a" style="left:669px;top:350px;font-size:13px;line-height:14px;letter-spacing:.55px;color:#616161">16577FA</div>
<div class="a" style="left:764px;top:350px;font-size:12.5px;line-height:14px;letter-spacing:-.2px;color:#1b659b;text-decoration:underline">CLAMP-HOSE</div>
<div class="a" style="left:1063px;top:350px;font-size:13px;line-height:14px;letter-spacing:.55px;color:#616161">01</div>
<div class="a" style="left:666px;top:371px;width:491px;height:27px;background:#dcdcdc"></div>
<div class="a" style="left:665px;top:398px;width:493px;height:1px;background:#c8c8c8"></div>
<div class="a" style="left:669px;top:378px;font-size:13px;line-height:14px;letter-spacing:.55px;color:#616161">16578</div>
<div class="a" style="left:764px;top:378px;font-size:12.5px;line-height:14px;letter-spacing:-.2px;color:#3b3bc2;text-decoration:underline">AIR DUCT</div>
<div class="a" style="left:1063px;top:378px;font-size:13px;line-height:14px;letter-spacing:.55px;color:#616161">01</div>
<div class="a" style="left:665px;top:426px;width:493px;height:1px;background:#c8c8c8"></div>
<div class="a" style="left:669px;top:406px;font-size:13px;line-height:14px;letter-spacing:.55px;color:#616161">16580T</div>
<div class="a" style="left:764px;top:406px;font-size:12.5px;line-height:14px;letter-spacing:-.2px;color:#3b3bc2;text-decoration:underline">RESONATOR ASSY-AIR</div>
<div class="a" style="left:1063px;top:406px;font-size:13px;line-height:14px;letter-spacing:.55px;color:#616161">01</div>
<div class="a" style="left:665px;top:454px;width:493px;height:1px;background:#c8c8c8"></div>
<div class="a" style="left:669px;top:434px;font-size:13px;line-height:14px;letter-spacing:.55px;color:#616161">16587N</div>
<div class="a" style="left:764px;top:434px;font-size:12.5px;line-height:14px;letter-spacing:-.2px;color:#1b659b;text-decoration:underline">CONNECTOR-AIR DUCT</div>
<div class="a" style="left:1063px;top:434px;font-size:13px;line-height:14px;letter-spacing:.55px;color:#616161">01</div>
<div class="a" style="left:665px;top:482px;width:493px;height:1px;background:#c8c8c8"></div>
<div class="a" style="left:669px;top:462px;font-size:13px;line-height:14px;letter-spacing:.55px;color:#616161">16597A</div>
<div class="a" style="left:764px;top:462px;font-size:12.5px;line-height:14px;letter-spacing:-.2px;color:#1b659b;text-decoration:underline">PIN</div>
<div class="a" style="left:1063px;top:462px;font-size:13px;line-height:14px;letter-spacing:.55px;color:#616161">04</div>
<div class="a" style="left:665px;top:510px;width:493px;height:1px;background:#c8c8c8"></div>
<div class="a" style="left:669px;top:490px;font-size:13px;line-height:14px;letter-spacing:.55px;color:#616161">16598</div>
<div class="a" style="left:764px;top:490px;font-size:12.5px;line-height:14px;letter-spacing:-.2px;color:#1b659b;text-decoration:underline">CLIP</div>
<div class="a" style="left:1063px;top:490px;font-size:13px;line-height:14px;letter-spacing:.55px;color:#616161">04</div>
<div class="a" style="left:665px;top:538px;width:493px;height:1px;background:#c8c8c8"></div>
<div class="a" style="left:669px;top:518px;font-size:13px;line-height:14px;letter-spacing:.55px;color:#616161">17090E</div>
<div class="a" style="left:764px;top:518px;font-size:12.5px;line-height:14px;letter-spacing:-.2px;color:#1b659b;text-decoration:underline">SEAL-O RING</div>
<div class="a" style="left:1063px;top:518px;font-size:13px;line-height:14px;letter-spacing:.55px;color:#616161">01</div>
<div class="a" style="left:665px;top:566px;width:493px;height:1px;background:#c8c8c8"></div>
<div class="a" style="left:669px;top:546px;font-size:13px;line-height:14px;letter-spacing:.55px;color:#616161">081108251D</div>
<div class="a" style="left:665px;top:594px;width:493px;height:1px;background:#c8c8c8"></div>
<div class="a" style="left:669px;top:574px;font-size:13px;line-height:14px;letter-spacing:.55px;color:#616161">083636255D</div>
<div class="a" style="left:665px;top:622px;width:493px;height:1px;background:#c8c8c8"></div>
<div class="a" style="left:669px;top:602px;font-size:13px;line-height:14px;letter-spacing:.55px;color:#616161">083636305D</div>
<div class="a" style="left:665px;top:650px;width:493px;height:1px;background:#c8c8c8"></div>
<div class="a" style="left:669px;top:630px;font-size:13px;line-height:14px;letter-spacing:.55px;color:#616161">083636355D</div>
<div class="a" style="left:665px;top:678px;width:493px;height:1px;background:#c8c8c8"></div>
<div class="a" style="left:669px;top:658px;font-size:13px;line-height:14px;letter-spacing:.55px;color:#616161">085105122C</div>
<div class="a" style="left:761px;top:60px;width:1px;height:618px;background:#c8c8c8"></div>
<div class="a" style="left:978px;top:60px;width:1px;height:618px;background:#c8c8c8"></div>
<div class="a" style="left:1059px;top:60px;width:1px;height:618px;background:#c8c8c8"></div>
<!-- iOS banner -->
<svg style="left:1178px;top:98px" width="158" height="200" viewBox="0 0 158 200">
<defs>
<radialGradient id="ibg" cx="0.6" cy="0.5" r="0.8"><stop offset="0" stop-color="#dedfe0"/><stop offset="0.6" stop-color="#cdced0"/><stop offset="1" stop-color="#b9babc"/></radialGradient>
<linearGradient id="ios" x1="0" y1="0" x2="0" y2="1"><stop offset="0" stop-color="#5a5a5a"/><stop offset="1" stop-color="#262626"/></linearGradient>
<linearGradient id="gearg" x1="0" y1="0" x2="1" y2="1"><stop offset="0" stop-color="#f6f6f6"/><stop offset="1" stop-color="#dcdcdc"/></linearGradient>
<clipPath id="bclip"><rect width="158" height="200"/></clipPath>
</defs>
<g clip-path="url(#bclip)">
<rect width="158" height="200" fill="url(#ibg)"/>
<path d="M44.0 141.2 L48.1 142.1 L48.4 147.5 L44.4 148.9 L42.7 154.4 L45.2 157.8 L42.0 162.1 L38.0 160.6 L33.1 163.8 L32.9 168.0 L27.7 169.2 L25.6 165.5 L19.8 164.8 L16.9 167.8 L12.2 165.4 L13.0 161.3 L9.0 157.0 L4.8 157.5 L2.7 152.5 L6.0 149.9 L5.7 144.1 L2.2 141.8 L3.8 136.6 L8.0 136.7 L11.5 132.0 L10.3 128.0 L14.8 125.1 L17.9 127.9 L23.6 126.6 L25.3 122.7 L30.6 123.4 L31.3 127.5 L36.5 130.2 L40.2 128.3 L43.9 132.2 L41.7 135.8Z" fill="url(#gearg)" style="filter:drop-shadow(1px 2px 2px rgba(0,0,0,.25))"/>
<circle cx="25.1" cy="146" r="16.6" fill="#cbcccd" stroke="#fff" stroke-width="1"/>
<path d="M184.9 169.3 L189.5 172.3 L187.6 178.8 L182.1 178.9 L177.9 185.1 L179.9 190.3 L174.5 194.5 L170.0 191.3 L163.0 193.9 L161.6 199.2 L154.7 199.4 L153.0 194.2 L145.7 192.1 L141.5 195.6 L135.8 191.8 L137.5 186.6 L132.8 180.6 L127.3 180.9 L125.0 174.5 L129.4 171.2 L129.1 163.7 L124.5 160.7 L126.4 154.2 L131.9 154.1 L136.1 147.9 L134.1 142.7 L139.5 138.5 L144.0 141.7 L151.0 139.1 L152.4 133.8 L159.3 133.6 L161.0 138.8 L168.3 140.9 L172.5 137.4 L178.2 141.2 L176.5 146.4 L181.2 152.4 L186.7 152.1 L189.0 158.5 L184.6 161.8Z" fill="url(#gearg)" style="filter:drop-shadow(-1px 2px 2px rgba(0,0,0,.25))"/>
<circle cx="157" cy="166.5" r="23.5" fill="#cbcccd" stroke="#fff" stroke-width="1"/>
<path d="M96.0 66.0 L98.0 66.9 L97.4 69.5 L95.2 69.5 L93.7 71.7 L94.4 73.7 L92.2 75.1 L90.7 73.5 L88.0 74.0 L87.1 76.0 L84.5 75.4 L84.5 73.2 L82.3 71.7 L80.3 72.4 L78.9 70.2 L80.5 68.7 L80.0 66.0 L78.0 65.1 L78.6 62.5 L80.8 62.5 L82.3 60.3 L81.6 58.3 L83.8 56.9 L85.3 58.5 L88.0 58.0 L88.9 56.0 L91.5 56.6 L91.5 58.8 L93.7 60.3 L95.7 59.6 L97.1 61.8 L95.5 63.3Z" fill="#e4e4e4" stroke="#c8c8c8" stroke-width="0.5"/>
<g transform="translate(41.8 74) scale(3.19 2.92)" style="filter:drop-shadow(0 0.6px 0.6px rgba(0,0,0,.3))"><path d="M12.152 6.896c-.948 0-2.415-1.078-3.96-1.04-2.04.027-3.91 1.183-4.961 3.014-2.117 3.675-.546 9.103 1.519 12.09 1.013 1.454 2.208 3.09 3.792 3.039 1.52-.065 2.09-.987 3.935-.987 1.831 0 2.35.987 3.96.948 1.637-.026 2.676-1.48 3.676-2.948 1.156-1.688 1.636-3.325 1.662-3.415-.039-.013-3.182-1.221-3.22-4.857-.026-3.04 2.48-4.494 2.597-4.559-1.429-2.09-3.623-2.324-4.39-2.376-2-.156-3.675 1.09-4.61 1.09zM15.53 3.83c.843-1.012 1.4-2.427 1.245-3.83-1.207.052-2.662.805-3.532 1.818-.78.896-1.454 2.338-1.273 3.714 1.338.104 2.715-.688 3.559-1.701" fill="#fff"/></g>
<path d="M10.3 10h136.5a3 3 0 0 1 3 3v47.7a3 3 0 0 1-3 3h-15.3l-21.3 35.3 9.3-35.3h-109.2a3 3 0 0 1-3-3v-47.7a3 3 0 0 1 3-3z" fill="#fff" stroke="#aaa" stroke-width="0.7" style="filter:drop-shadow(0 1px 1.5px rgba(0,0,0,.3))"/>
<text x="78.7" y="37.2" text-anchor="middle" font-family="Liberation Sans" font-weight="bold" font-size="23" fill="#c5002f" textLength="120" lengthAdjust="spacingAndGlyphs">AUTODOC</text>
<text x="79.3" y="53.8" text-anchor="middle" font-family="Liberation Sans" font-weight="bold" font-size="19" fill="#6e6e6e" textLength="95" lengthAdjust="spacingAndGlyphs">в кармане</text>
<text x="79" y="190.7" text-anchor="middle" font-family="Liberation Sans" font-weight="bold" font-size="50" fill="url(#ios)" textLength="72" lengthAdjust="spacingAndGlyphs" style="filter:drop-shadow(0 1px 1px rgba(0,0,0,.3))">iOS</text>
</g>
</svg>
<!-- autodoc banner -->
<svg style="left:1178px;top:308px" width="158" height="200" viewBox="0 0 158 200">
<defs>
<linearGradient id="abg" x1="0" y1="0" x2="0" y2="1"><stop offset="0" stop-color="#07142e"/><stop offset="0.4" stop-color="#0a2050"/><stop offset="0.65" stop-color="#0b409a"/><stop offset="0.85" stop-color="#0a62da"/><stop offset="1" stop-color="#0a6cec"/></linearGradient>
<linearGradient id="btn" x1="0" y1="0" x2="0" y2="1"><stop offset="0" stop-color="#f02a2a"/><stop offset="1" stop-color="#b80d12"/></linearGradient>
<linearGradient id="adt" x1="0" y1="0" x2="0" y2="1"><stop offset="0" stop-color="#fff"/><stop offset="1" stop-color="#c8ccd4"/></linearGradient>
</defs>
<rect width="158" height="200" fill="url(#abg)"/>
<rect x="0" y="92" width="4" height="36" fill="#a9b9c9" opacity="0.7"/>
<path d="M49.5 42.1 L55.4 42.9 L55.3 48.1 L49.4 48.6 L47.4 53.0 L51.0 57.7 L47.2 61.3 L42.7 57.5 L38.2 59.2 L37.4 65.1 L32.2 65.0 L31.7 59.1 L27.3 57.1 L22.6 60.7 L19.0 56.9 L22.8 52.4 L21.1 47.9 L15.2 47.1 L15.3 41.9 L21.2 41.4 L23.2 37.0 L19.6 32.3 L23.4 28.7 L27.9 32.5 L32.4 30.8 L33.2 24.9 L38.4 25.0 L38.9 30.9 L43.3 32.9 L48.0 29.3 L51.6 33.1 L47.8 37.6Z" fill="#f03a3a"/>
<circle cx="35.3" cy="45" r="10.5" fill="#0a1a3c"/>
<rect x="32" y="30" width="7" height="30" fill="#0a1a3c" opacity="0.0"/>
<text x="26.6" y="48.8" font-family="Liberation Sans" font-weight="bold" font-size="13" fill="url(#adt)" textLength="88.7" lengthAdjust="spacingAndGlyphs">autodoc</text>
<text x="115" y="51" font-family="Liberation Sans" font-weight="bold" font-size="13" fill="#f02a2a" textLength="27" lengthAdjust="spacingAndGlyphs">.ru</text>
<text x="58" y="58" font-family="Liberation Sans" font-weight="bold" font-size="5.8" fill="#e8e8e8" textLength="84" lengthAdjust="spacing">АВТОЗАПЧАСТИ</text>
<rect x="29" y="158" width="98" height="29" rx="4" fill="url(#btn)" style="filter:drop-shadow(0 1px 1px rgba(0,0,0,.5))"/>
<text x="78" y="180" text-anchor="middle" font-family="Liberation Sans" font-weight="bold" font-size="19" fill="#fff" textLength="78" lengthAdjust="spacingAndGlyphs">КУПИТЬ</text>
</svg>
<!-- payments -->
<div class="a" style="left:1178px;top:520px;width:160px;height:200px;background:#fff;border:1px solid #aeb0b4;border-radius:4px 4px 0 0"></div>
<div class="a" style="left:1178px;top:520px;width:160px;height:22px;background:#a7aec2;border-radius:4px 4px 0 0"></div>
<div class="a" style="left:1184px;top:525px;font-size:12px;line-height:14px;letter-spacing:.5px;font-weight:bold;color:#fff;text-shadow:0 0 1px #999">Электронные платежи</div>
<svg style="left:1178px;top:542px" width="160" height="160" viewBox="0 0 160 160">
<defs><linearGradient id="mirb" x1="0" y1="0" x2="1" y2="0"><stop offset="0" stop-color="#0aa2e0"/><stop offset="1" stop-color="#1762b8"/></linearGradient></defs>
<path d="M43.5 16h8l4.5 12 4.5-12h8v21h-6v-13l-4.5 13h-4l-4.5-13v13h-6z" fill="#2d9a3e"/>
<path d="M70 16h6v12l8.5-12h6v21h-6v-12l-8.5 12h-6z" fill="#2d9a3e"/>
<path d="M92.5 16h16a7.5 7.5 0 0 1 7.5 7.5h-23.5z" fill="url(#mirb)"/>
<path d="M92.5 25h22a6 6 0 0 1-6 5h-10v7h-6z" fill="#2d9a3e"/>
<circle cx="26.6" cy="71.5" r="11.5" fill="#eb001b"/>
<circle cx="40.3" cy="71.5" r="11.5" fill="#f79e1b"/>
<path d="M33.45 62.3a11.5 11.5 0 0 1 0 18.4a11.5 11.5 0 0 1 0-18.4z" fill="#ff5f00"/>
<text x="59" y="76" font-family="Liberation Sans" font-size="16" fill="#222" textLength="85" lengthAdjust="spacingAndGlyphs">mastercard</text>
<text x="59" y="115.5" font-family="Liberation Sans" font-weight="bold" font-style="italic" font-size="18" fill="#1a1f71" textLength="44" lengthAdjust="spacingAndGlyphs">VISA</text>
<path d="M57 127c10-6 25-8 46-7l-1 3c-18-1-32 1-45 5z" fill="#f7b600"/>
<path d="M46 150l3 10h-4z" fill="#e31e24"/>
<path d="M100 148l-8 12h14z" fill="#f6c21c"/>
</svg>
<!-- floating header -->
<div class="a" style="left:1px;top:58px;width:1326px;height:50px;background:linear-gradient(180deg,rgba(252,252,252,.97) 0%,rgba(252,252,252,.97) 60%,rgba(242,242,242,.97) 78%,rgba(226,226,226,.97) 100%)"></div>
<div class="a" style="left:1px;top:58px;width:1326px;height:50px;background:repeating-linear-gradient(90deg,rgba(0,0,0,.025) 0 1px,transparent 1px 2px)"></div>
<div class="a" style="left:1px;top:58px;width:1326px;height:1px;background:repeating-linear-gradient(90deg,rgba(0,0,0,.08) 0 1px,transparent 1px 2px)"></div>
<div class="a" style="left:1px;top:107px;width:1326px;height:1px;background:repeating-linear-gradient(90deg,rgba(0,0,0,.12) 0 1px,transparent 1px 3px)"></div>
<!-- search -->
<div class="a" style="left:167px;top:61px;width:227px;height:18px;background:#fff;border:1px solid #b9b9b9"></div>
<div class="a" style="left:172px;top:63px;font-size:14px;line-height:16px;letter-spacing:.7px;color:#ababab">Артикул детали</div>
<div class="a" style="left:393px;top:61px;width:22px;height:18px;background:linear-gradient(180deg,#d81a30,#8e0a1a);border-radius:0 3px 3px 0"></div>
<svg style="left:397px;top:63px" width="14" height="14" viewBox="0 0 14 14"><circle cx="5.5" cy="5.8" r="3.6" fill="none" stroke="#fff" stroke-width="1.6"/><path d="M8.2 8.5L11.8 11.8" stroke="#fff" stroke-width="2"/></svg>
<div class="a" style="left:171px;top:87px;font-size:11.5px;line-height:12px;color:#777">Пример:</div>
<div class="a" style="left:222px;top:87px;font-size:11.5px;line-height:12px;letter-spacing:.05px;color:#666;border-bottom:1px dashed #555;padding-bottom:0px">14E8BA</div>
<div class="a" style="left:269.5px;top:86.5px;width:10px;height:10px;border-radius:50%;background:#b8b8b8"></div>
<div class="a" style="left:272px;top:86px;font-size:9px;line-height:11px;font-weight:bold;color:#fff">?</div>
<!-- separators -->
<div class="a" style="left:770px;top:58px;width:1px;height:36px;background:#dcdcdc"></div>
<div class="a" style="left:907px;top:58px;width:1px;height:36px;background:#dcdcdc"></div>
<div class="a" style="left:1093px;top:58px;width:1px;height:36px;background:#dcdcdc"></div>
<div class="a" style="left:1213px;top:58px;width:1px;height:36px;background:#dcdcdc"></div>
<!-- garage -->
<div class="a" style="left:792px;top:62px;width:29px;height:27px;background:#fff"></div>
<svg style="left:792px;top:62px" width="29" height="27" viewBox="0 0 29 27">
<defs><linearGradient id="gp" x1="0" y1="0" x2="0" y2="1"><stop offset="0" stop-color="#999"/><stop offset="1" stop-color="#111"/></linearGradient></defs>
<rect x="1.5" y="4" width="27" height="2.6" fill="#8a8a8a"/>
<path d="M3 8h23v14.5h-2.5v-12.3h-18v12.3h-2.5z" fill="url(#gp)"/>
<rect x="6" y="11" width="17.5" height="1.6" fill="#d9405a"/>
<rect x="6" y="13" width="17.5" height="1.4" fill="#e0566c"/>
<path d="M9 15h11l1.5 3h1v4h-14.5v-4h1z" fill="#1a1a1a"/>
<rect x="9" y="18.5" width="2.5" height="1.2" fill="#fff"/><rect x="18" y="18.5" width="2.5" height="1.2" fill="#fff"/>
</svg>
<div class="a" style="left:826px;top:67px;font-size:11.5px;line-height:13px;letter-spacing:.2px;color:#858585">Мой гараж</div>
<!-- orders -->
<svg style="left:928px;top:60px" width="34" height="32" viewBox="0 0 34 32">
<path d="M11.1 5.2A11.5 11.5 0 1 0 21.6 25.4" fill="none" stroke="#d5001c" stroke-width="3"/>
<path d="M4.5 2.5L12.8 2L11.5 10Z" fill="#d5001c"/>
<path d="M15.5 3.5H23.5V11.5H31V23H14V5Z" fill="#474747"/>
<path d="M18.5 17.5H31" stroke="#fff" stroke-width="1.2"/>
<path d="M26.5 12.5L30 12.5L30 15Z" fill="#aaa"/>
</svg>
<div class="a" style="left:969px;top:67px;font-size:11.5px;line-height:13px;letter-spacing:.35px;color:#858585">Движение заказов</div>
<!-- balance -->
<svg style="left:1116px;top:60px" width="30" height="28" viewBox="0 0 30 28">
<path d="M7 6.5C9 1 18 0 21.5 6.5z" fill="#d8202f"/>
<path d="M7.5 4.8L21 3" stroke="#fff" stroke-width="0.8"/>
<rect x="1" y="6.8" width="26.5" height="18.8" rx="1" fill="#494949"/>
<circle cx="24.5" cy="15.5" r="4.3" fill="#d8202f"/><circle cx="24" cy="15.5" r="1.6" fill="#fff"/>
<text x="9" y="21" font-family="Liberation Sans" font-weight="bold" font-size="11" fill="#fff">₽</text>
</svg>
<div class="a" style="left:1152px;top:67px;font-size:11.5px;line-height:13px;letter-spacing:.1px;color:#858585">Баланс</div>
<!-- cart -->
<svg style="left:1235px;top:63px" width="25" height="27" viewBox="0 0 25 27">
<path d="M1 1.5h2.5l3.5 19h14" fill="none" stroke="#444" stroke-width="1.6"/>
<path d="M3.8 4.5h19.5l-2.8 11h-14.8z" fill="#555"/>
<path d="M8.5 5v10M12 5v10M15.5 5v10M19 5v10M4.5 8.5h18M5.3 12h16" stroke="#fff" stroke-width="1" opacity=".9"/>
<circle cx="7.5" cy="23.5" r="2.2" fill="#d8202f"/><circle cx="19.5" cy="23.5" r="2.2" fill="#d8202f"/>
<path d="M7.5 20.5v2M19.5 20.5v2" stroke="#444" stroke-width="1.2"/>
</svg>
<div class="a" style="left:1267px;top:67px;font-size:11.5px;line-height:13px;letter-spacing:.3px;color:#858585">Корзина</div>
<div class="a" style="left:1335px;top:58px;width:1px;height:30px;background:#8a96b4"></div>
<div class="a" style="left:1327px;top:87px;width:9px;height:1px;background:#8a96b4"></div>
<div class="a" style="left:1350px;top:58px;width:16px;height:637px;background:#f0f0f0"></div>
<div class="a" style="left:1352px;top:163px;width:13px;height:188px;background:#c1c1c1"></div>
<svg style="left:1354px;top:64px" width="9" height="6" viewBox="0 0 9 6"><path d="M0 5.5L4.5 0.5L9 5.5Z" fill="#505050"/></svg>
<svg style="left:1354px;top:684px" width="9" height="6" viewBox="0 0 9 6"><path d="M0 0.5L4.5 5.5L9 0.5Z" fill="#505050"/></svg>
<div class="a" style="left:0;top:695px;width:1366px;height:40px;background:#0b1014"></div>
<div class="a" style="left:0;top:735px;width:1366px;height:33px;background:#fff"></div>
<!-- win logo -->
<svg style="left:15px;top:706px" width="18" height="18" viewBox="0 0 18 18"><path d="M0.5 2.6L7.6 1.6V8.4H0.5zM8.6 1.4L17.5 0.3V8.4H8.6zM0.5 9.4H7.6V16.2L0.5 15.2zM8.6 9.4H17.5V17.5L8.6 16.4z" fill="#fff"/></svg>
<!-- search -->
<svg style="left:63px;top:705px" width="20" height="20" viewBox="0 0 20 20"><circle cx="12" cy="8" r="6" fill="none" stroke="#fff" stroke-width="1.4"/><path d="M7.8 12.2L1.5 18.5" stroke="#fff" stroke-width="1.5"/></svg>
<!-- task view -->
<svg style="left:109px;top:707px" width="22" height="16" viewBox="0 0 22 16"><rect x="5" y="1" width="12" height="14" fill="none" stroke="#fff" stroke-width="1.3"/><path d="M3 3H1.2V13H3M19 3H20.8V13H19" fill="none" stroke="#fff" stroke-width="1.2"/></svg>
<!-- edge -->
<svg style="left:160px;top:703px" width="23" height="24" viewBox="0 0 23 24">
<path d="M1 10.5C2.5 4 7.5 1 12.5 1C18 1 22 5 21.8 13.5H8.5C8.8 17.5 11.5 19.5 15 19.5C17.5 19.5 19.5 18.8 21 18V21.5C19.3 22.4 17 23 14.2 23C7.5 23 3.5 18.5 3.5 13C3.5 9.5 5 7 7.5 5.5C4.5 6.5 2.5 8.5 1 10.5Z" fill="#1078d6"/>
<path d="M8.2 10.8C8.6 8.2 10.6 6.5 13 6.5C15.5 6.5 17.3 8.2 17.5 10.8Z" fill="#0b1014"/>
</svg>
<!-- explorer -->
<svg style="left:209px;top:705px" width="23" height="20" viewBox="0 0 23 20">
<path d="M0.3 1.2H9L10.5 2.6H21.5V18H0.3Z" fill="#fde38a"/>
<path d="M0.3 1.2H9L10.5 2.6H0.3Z" fill="#f0c040"/>
<path d="M3.8 19V11.2H17.8V19H14.2V14.2H8V19Z" fill="#3cbaf0"/>
</svg>
<!-- store -->
<svg style="left:257px;top:702px" width="22" height="25" viewBox="0 0 22 25"><path d="M7 6V4A4 4 0 0 1 15 4V6" fill="none" stroke="#fff" stroke-width="1.3"/><path d="M0.8 6H21.2V23.5L0.8 22z" fill="#fff"/><path d="M5 10.5L10 10.2V14.5H5zM11 10.1L16.5 9.8V14.5H11zM5 15.5H10V19.8L5 19.5zM11 15.5H16.5V20.5L11 20z" fill="#0b1014"/></svg>
<!-- yandex active -->
<div class="a" style="left:294px;top:695px;width:48px;height:40px;background:#3b4147"></div>
<div class="a" style="left:294px;top:733px;width:48px;height:2px;background:#76b9ed"></div>
<svg style="left:306px;top:703px" width="24" height="24" viewBox="0 0 24 24"><defs><radialGradient id="yg" cx=".45" cy=".4" r=".6"><stop offset="0" stop-color="#fafafa"/><stop offset="1" stop-color="#d8d8d8"/></radialGradient></defs><circle cx="11.7" cy="11.7" r="11" fill="url(#yg)"/><path d="M6.5 5.5L11.7 12.5V19M17 5.5L11.7 12.5" fill="none" stroke="#e3141e" stroke-width="2.4"/></svg>
<!-- chrome -->
<svg style="left:355px;top:703px" width="24" height="24" viewBox="0 0 24 24"><circle cx="11.8" cy="11.7" r="11" fill="#2fa04c"/><path d="M11.8 0.7A11 11 0 0 1 21.3 6.2H11.8A5.5 5.5 0 0 0 7 9L2.3 6.1A11 11 0 0 1 11.8 0.7z" fill="#e04434"/><path d="M21.3 6.2A11 11 0 0 1 11 22.7L15.8 14.5A5.5 5.5 0 0 0 16.5 9L21.3 6.2z" fill="#f7c42e"/><path d="M21.3 6.2H11.8A5.5 5.5 0 0 1 16.5 9z" fill="#f7c42e"/><circle cx="11.8" cy="11.7" r="5" fill="#fff"/><circle cx="11.8" cy="11.7" r="3.9" fill="#4c8bf4"/></svg>
<!-- firefox -->
<svg style="left:404px;top:703px" width="24" height="24" viewBox="0 0 24 24"><defs><radialGradient id="ffg" cx=".7" cy=".2" r=".9"><stop offset="0" stop-color="#ffd43a"/><stop offset=".45" stop-color="#f7851e"/><stop offset="1" stop-color="#d8381e"/></radialGradient><radialGradient id="ffb" cx=".6" cy=".3" r=".7"><stop offset="0" stop-color="#3a8ae0"/><stop offset="1" stop-color="#1b3f8a"/></radialGradient></defs>
<circle cx="11.6" cy="12" r="11" fill="url(#ffg)"/>
<circle cx="13.2" cy="10.2" r="7.2" fill="url(#ffb)"/>
<path d="M2.5 9C3 15 7 19 12.5 18.5C16.5 18 19.5 15.5 21 12C21.5 17.5 17 22.5 11.5 22.5C5.5 22.5 1.5 18 1.5 12.5C1.5 11 1.8 10 2.5 9Z" fill="#ef6a1e"/>
<path d="M5 6.5C6 4 8 3 10 3C8.5 4.5 8 6 8.5 8C9.5 11 12 12.5 14 11.5C12.5 14 8.5 14.5 6.5 12C5 10.5 4.8 8.5 5 6.5Z" fill="#f7941e"/>
<path d="M9 4.5C10 3.5 12 3 13 3.5C11.5 4 10.5 5 10 6Z" fill="#ffcb3a"/>
</svg>
<!-- skype -->
<div class="a" style="left:445px;top:733px;width:40px;height:2px;background:#76b9ed"></div>
<svg style="left:452px;top:703px" width="26" height="24" viewBox="0 0 26 24"><circle cx="12" cy="11" r="10.5" fill="#1ba5e8"/><text x="12" y="16.5" text-anchor="middle" font-family="Liberation Sans" font-weight="bold" font-size="15" fill="#fff">S</text><circle cx="18.5" cy="17.2" r="5" fill="#fff" stroke="#6bb42a" stroke-width="1.3"/></svg>
<!-- tray -->
<svg style="left:1120px;top:710px" width="14" height="9" viewBox="0 0 14 9"><path d="M1 8L7 1.5L13 8" fill="none" stroke="#fff" stroke-width="1.3"/></svg>
<svg style="left:1145px;top:707px" width="15" height="15" viewBox="0 0 15 15"><path d="M1 14A13 13 0 0 1 14 1M3.8 14A10.2 10.2 0 0 1 14 3.8M6.6 14A7.4 7.4 0 0 1 14 6.6M9.4 14A4.6 4.6 0 0 1 14 9.4" fill="none" stroke="#cfcfcf" stroke-width="1"/><circle cx="12.5" cy="12.5" r="1.6" fill="#fff"/></svg>
<svg style="left:1166px;top:709px" width="19" height="12" viewBox="0 0 19 12"><rect x="6.5" y="2.5" width="10.5" height="8" fill="none" stroke="#fff" stroke-width="1.1"/><rect x="17" y="4.5" width="1.3" height="4" fill="#fff"/><path d="M1 6H5M2.5 1.5V4.5M4.5 1.5V4.5M2 4.5H5V7H2z" stroke="#fff" stroke-width="1" fill="none"/></svg>
<svg style="left:1190px;top:707px" width="18" height="17" viewBox="0 0 18 17"><path d="M1 5.5H4L8.5 1.5V15.5L4 11.5H1z" fill="none" stroke="#fff" stroke-width="1.1"/><path d="M11 5.5A3.5 3.5 0 0 1 11 11.5M13 3.5A6 6 0 0 1 13 13.5M15 1.5A8.5 8.5 0 0 1 15 15.5" fill="none" stroke="#ccc" stroke-width="1"/></svg>
<div class="a" style="left:1218px;top:708px;font-size:12px;line-height:13px;color:#fff;letter-spacing:.3px">РУС</div>
<div class="a" style="left:1266px;top:699px;font-size:11.5px;line-height:13px;letter-spacing:-.2px;color:#fff">10:45</div>
<div class="a" style="left:1253px;top:717px;font-size:11.5px;line-height:13px;letter-spacing:-.45px;color:#fff">05.02.2017</div>
<svg style="left:1324px;top:706px" width="18" height="18" viewBox="0 0 18 18"><path d="M1.5 1.5H16.5V12.5H11L9 14.8L7 12.5H1.5z" fill="none" stroke="#fff" stroke-width="1.2"/></svg>
<div class="a" style="left:1361px;top:695px;width:1px;height:40px;background:#5a5f64"></div>

</body></html>
